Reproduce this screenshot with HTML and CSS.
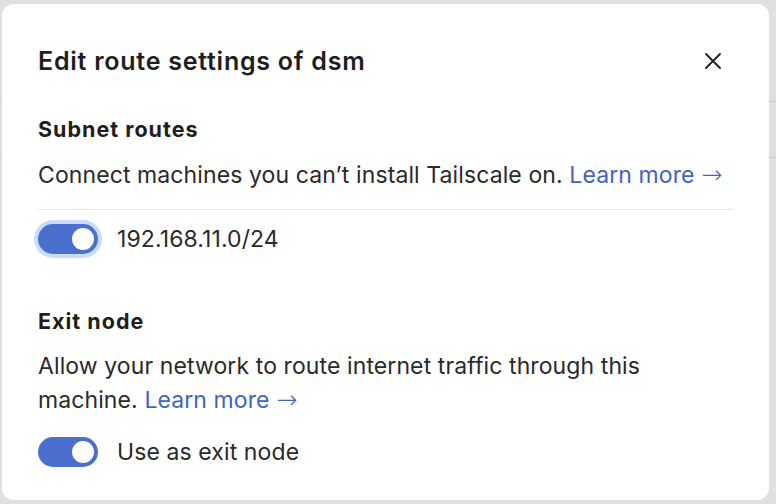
FILE: index.html
```html
<!DOCTYPE html>
<html lang="en">
<head>
<meta charset="utf-8">
<title>Edit route settings</title>
<link rel="stylesheet" href="styles.css">
</head>
<body>
<div class="modal" role="dialog">
  <header class="modal-head">
    <h1 class="title">Edit route settings of dsm</h1>
    <button class="close" aria-label="Close">
      <svg width="18" height="18" viewBox="0 0 18 18"><path d="M2 2L16 16M16 2L2 16" stroke="#222" stroke-width="1.9" stroke-linecap="round" fill="none"/></svg>
    </button>
  </header>
  <section class="section">
    <h2 class="sec-title">Subnet routes</h2>
    <p class="desc">Connect machines you can’t install Tailscale on. <a class="link" href="#">Learn more <span class="arrow">→</span></a></p>
    <div class="divider"></div>
    <label class="row">
      <span class="toggle focused"><span class="knob"></span></span>
      <span class="row-text">192.168.11.0/24</span>
    </label>
  </section>
  <section class="section exit">
    <h2 class="sec-title">Exit node</h2>
    <p class="desc">Allow your network to route internet traffic through this machine. <a class="link" href="#">Learn more <span class="arrow">→</span></a></p>
    <label class="row row-exit">
      <span class="toggle"><span class="knob"></span></span>
      <span class="row-text">Use as exit node</span>
    </label>
  </section>
</div>
</body>
</html>
```
FILE: styles.css
```css
html, body {
  margin: 0;
  padding: 0;
}
body {
  width: 776px;
  height: 504px;
  overflow: hidden;
  font-family: Inter, "Noto Sans", sans-serif;
  color: #232323;
  background:
    linear-gradient(#c9c9c9, #c9c9c9) 0 101px / 100% 1px no-repeat,
    linear-gradient(#c9c9c9, #c9c9c9) 0 157px / 100% 1px no-repeat,
    #e0e0e0;
}
.modal {
  box-sizing: border-box;
  margin: 4px 0 0 2px;
  width: 767px;
  height: 496px;
  background: #fff;
  border-radius: 12px;
  padding: 0 35px 0 36px;
  display: flex;
  flex-direction: column;
}
.modal-head {
  display: flex;
  align-items: center;
  justify-content: space-between;
  height: 114px;
  flex: none;
}
.title {
  margin: 0;
  font-size: 25px;
  line-height: 32px;
  font-weight: 600;
  color: #1e1e1e;
  letter-spacing: 0.75px;
}
.close {
  border: 0;
  background: none;
  padding: 0;
  width: 18px;
  height: 18px;
  margin-right: 12px;
  display: flex;
}
.sec-title {
  margin: 0;
  font-size: 21.5px;
  font-weight: 700;
  line-height: 22px;
  letter-spacing: 1px;
  color: #1e1e1e;
}
.desc {
  margin: 0;
  font-size: 23px;
  line-height: 34px;
  letter-spacing: 0.1px;
  color: #2a2a2a;
  padding-top: 18px;
}
.link {
  color: #4063c3;
  text-decoration: none;
}
.arrow {
  font-family: "DejaVu Sans", sans-serif;
  font-weight: 200;
  font-size: 25px;
  line-height: 1;
}
.divider {
  height: 1px;
  background: #e6e6e6;
  margin-top: 17px;
}
.row {
  display: flex;
  align-items: center;
  gap: 19px;
  margin-top: 14px;
  height: 30px;
}
.row-exit {
  margin-top: 20px;
}
.toggle {
  box-sizing: border-box;
  width: 60px;
  height: 30px;
  border-radius: 15px;
  background: #4a6fcf;
  display: flex;
  align-items: center;
  justify-content: flex-end;
  padding-right: 4px;
  flex: none;
}
.toggle.focused {
  box-shadow: 0 0 0 4px #c9ddf9;
}
.knob {
  width: 22px;
  height: 22px;
  border-radius: 50%;
  background: #fff;
}
.row-text {
  font-size: 23px;
  line-height: 30px;
  letter-spacing: 0.1px;
  color: #2a2a2a;
}
.exit {
  margin-top: 56px;
}
.exit .desc {
  padding-top: 17px;
}
```
